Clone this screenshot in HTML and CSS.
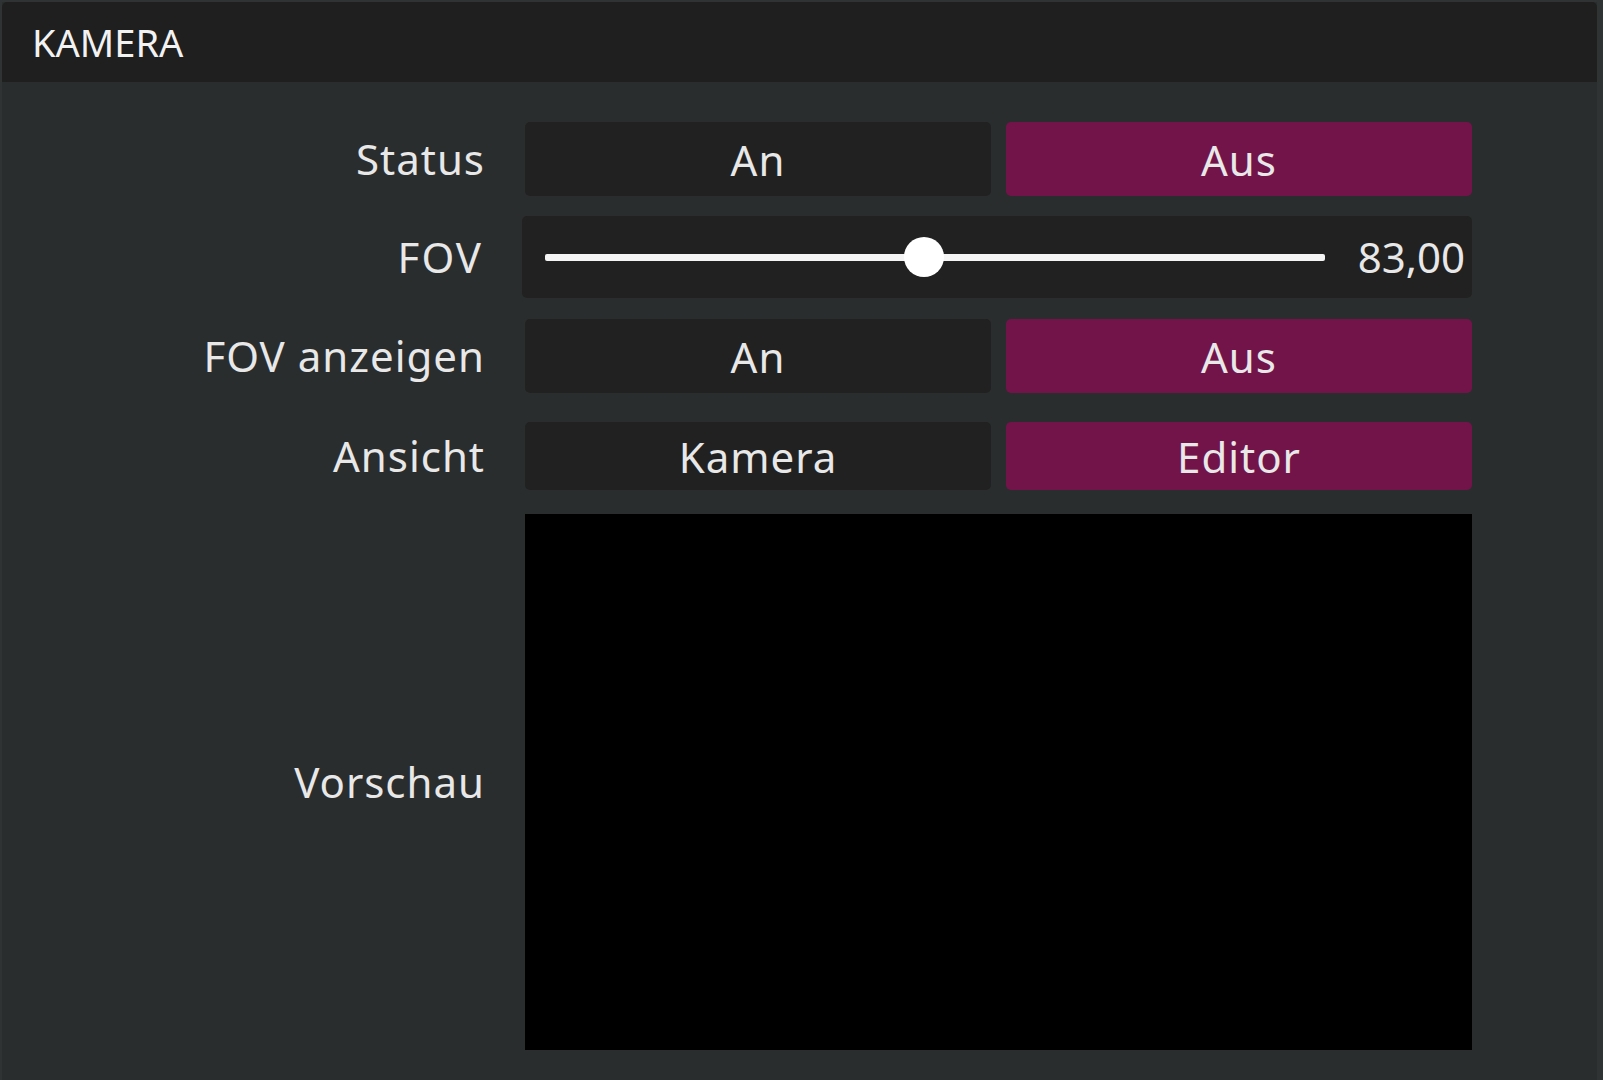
FILE: index.html
```html
<!DOCTYPE html>
<html lang="de">
<head>
    <meta charset="UTF-8">
    <title>Kamera</title>
    <link rel="stylesheet" href="styles.css">
</head>
<body>
    <div class="panel">
        <div class="panel-header">KAMERA</div>

        <div class="settings">
            <!-- Status -->
            <div class="row row-status">
                <span class="label">Status</span>
                <div class="toggle">
                    <button class="toggle-btn">An</button>
                    <button class="toggle-btn active">Aus</button>
                </div>
            </div>

            <!-- FOV Regler -->
            <div class="row row-fov">
                <span class="label">FOV</span>
                <div class="slider">
                    <div class="slider-track">
                        <div class="slider-knob" style="left: 48.6%"></div>
                    </div>
                    <span class="slider-value">83,00</span>
                </div>
            </div>

            <div class="row row-showfov">
                <span class="label">FOV anzeigen</span>
                <div class="toggle">
                    <button class="toggle-btn">An</button>
                    <button class="toggle-btn active">Aus</button>
                </div>
            </div>

            <div class="row row-view">
                <span class="label">Ansicht</span>
                <div class="toggle">
                    <button class="toggle-btn">Kamera</button>
                    <button class="toggle-btn active">Editor</button>
                </div>
            </div>

            <!-- Vorschau der Kamera -->
            <div class="row row-preview">
                <span class="label">Vorschau</span>
                <div class="preview"></div>
            </div>
        </div>
    </div>
</body>
</html>
```

FILE: styles.css
```css
:root {
    --frame-color: #303334;
    --panel-color: #2a2d2e;
    --header-color: #1f1f1f;
    --button-color: #212121;
    --accent-color: #72144a;
    --text-color: #e8e8e8;
    --radius: 5px;
}

body, html {
    margin: 0;
    padding: 0;
    height: 100%;
    background-color: var(--frame-color);
    font-family: 'Noto Sans', 'Open Sans', sans-serif;
    color: var(--text-color);
    overflow: hidden;
}

.panel {
    margin: 2px 6px 0 2px;
    min-height: 100vh;
    background-color: var(--panel-color);
}

.panel-header {
    height: 80px;
    margin-top: 1px;
    display: flex;
    align-items: center;
    padding-left: 30px;
    background-color: var(--header-color);
    border-radius: var(--radius) var(--radius) 0 0;
    font-size: 38px;
    color: #f2f2f2;
}

.settings {
    display: flex;
    flex-direction: column;
    padding-top: 40px;
}

.row {
    display: grid;
    grid-template-columns: 483px 947px;
    column-gap: 40px;
    align-items: center;
}

.label {
    text-align: right;
    font-size: 42px;
    line-height: 1;
    letter-spacing: 1px;
}

.row-status { height: 74px; }
.row-fov { height: 82px; margin-top: 20px; }
.row-showfov { height: 74px; margin-top: 21px; }
.row-view { height: 68px; margin-top: 29px; }
.row-preview { height: 536px; margin-top: 24px; }

.row-fov .label {
    letter-spacing: 2px;
    padding-right: 2px;
}

.toggle {
    display: grid;
    grid-template-columns: 1fr 1fr;
    gap: 15px;
    height: 100%;
}

.toggle-btn {
    height: 100%;
    border: none;
    border-radius: var(--radius);
    background-color: var(--button-color);
    color: var(--text-color);
    font-family: inherit;
    font-size: 42px;
    letter-spacing: 1px;
    padding: 0;
    cursor: pointer;
}

.toggle-btn.active {
    background-color: var(--accent-color);
}

.slider {
    height: 100%;
    margin-left: -3px;
    display: flex;
    align-items: center;
    gap: 33px;
    padding: 0 7px 0 23px;
    background-color: var(--button-color);
    border-radius: var(--radius);
}

.slider-track {
    position: relative;
    flex: 1;
    height: 7px;
    background-color: #f5f5f5;
    border-radius: 2px;
}

.slider-knob {
    position: absolute;
    top: 50%;
    width: 40px;
    height: 40px;
    border-radius: 50%;
    background-color: #ffffff;
    transform: translate(-50%, -50%);
}

.slider-value {
    font-size: 42px;
    line-height: 1;
}

.preview {
    height: 100%;
    background-color: #000000;
}
```
